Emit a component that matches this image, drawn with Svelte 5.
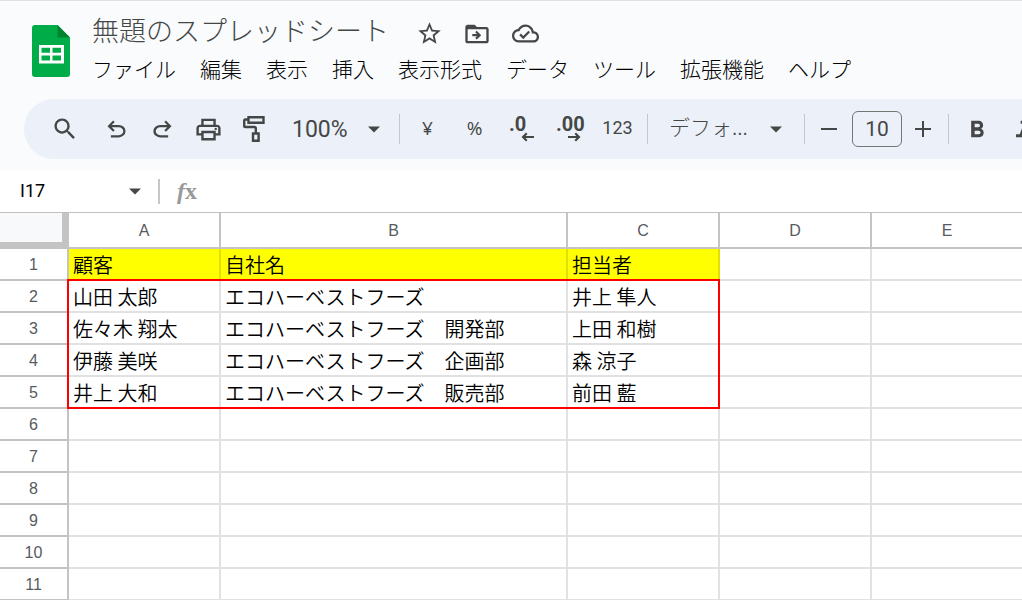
<script>
    const menus = ["ファイル", "編集", "表示", "挿入", "表示形式", "データ", "ツール", "拡張機能", "ヘルプ"]

    // column widths and row heights include the 2px grid line
    const headWidth = 69;
    const rowHeight = 32;
    const columns = [{name: "A", width: 152}, {name: "B", width: 347}, {name: "C", width: 152}, {name: "D", width: 152}, {name: "E", width: 0}]
    const rows = [
        ["顧客", "自社名", "担当者"],
        ["山田 太郎", "エコハーベストフーズ", "井上 隼人"],
        ["佐々木 翔太", "エコハーベストフーズ　開発部", "上田 和樹"],
        ["伊藤 美咲", "エコハーベストフーズ　企画部", "森 涼子"],
        ["井上 大和", "エコハーベストフーズ　販売部", "前田 藍"],
        [], [], [], [], [], []
    ]
    // rows 2-5, columns A-C
    const range = {fromRow: 1, toRow: 4, cols: 3}

    const rangeWidth = columns.slice(0, range.cols).reduce((sum, c) => sum + c.width, 0) + 2;
    const rangeHeight = (range.toRow - range.fromRow + 1) * rowHeight + 2;
    const rangeTop = 36 + range.fromRow * rowHeight - 2;

    let title = $state("無題のスプレッドシート");
    let cell = $state("I17");
    let fontSize = $state("10");
</script>

{#snippet arrow()}
    <svg class="arrow" width="12" height="7" viewBox="0 0 12 7" aria-hidden="true"><path d="M0 0.5h12L6 6.5z" /></svg>
{/snippet}

<div class="app">
    <header>
        <div class="top">
            <svg class="logo" width="38" height="52" viewBox="0 0 38 52" aria-hidden="true">
                <path fill="#00ac47" d="M3 0h22.500l12.500 12.500V49a3 3 0 0 1-3 3H3a3 3 0 0 1-3-3V3a3 3 0 0 1 3-3z" />
                <path fill="#00832d" d="M25.500 0L38 12.500H25.500z" />
                <path fill="#fff" fill-rule="evenodd" d="M7 20h25v18.500H7zM9.500 22.800v5h8.500v-5zM20.500 22.800v5H29v-5zM9.500 30.500v5h8.500v-5zM20.500 30.500v5H29v-5z" />
            </svg>
            <div class="heading">
                <div class="title-row">
                    <input class="title" aria-label="名前を変更" bind:value={title} />
                    <button aria-label="スター">
                        <svg width="27" height="27" viewBox="0 0 24 24"><path d="M22 9.240l-7.190-.62L12 2 9.190 8.630 2 9.240l5.460 4.730L5.820 21 12 17.270 18.180 21l-1.630-7.030L22 9.240zM12 15.400l-3.760 2.270 1-4.280-3.320-2.880 4.380-.38L12 6.100l1.710 4.040 4.380.38-3.320 2.880 1 4.280L12 15.400z" /></svg>
                    </button>
                    <button aria-label="移動">
                        <svg width="28" height="28" viewBox="0 0 24 24"><path d="M20 6h-8l-2-2H4c-1.100 0-2 .9-2 2v12c0 1.100.9 2 2 2h16c1.100 0 2-.9 2-2V8c0-1.100-.9-2-2-2zm0 12H4V8h16v10zm-8.200-1.200l-1.300-1.300 1.500-1.600H8v-1.800h4l-1.500-1.600 1.300-1.300L15.600 13z" /></svg>
                    </button>
                    <button aria-label="ドライブに保存しました">
                        <svg width="27" height="27" viewBox="0 0 24 24"><path d="M19.350 10.040C18.670 6.590 15.640 4 12 4 9.110 4 6.600 5.640 5.350 8.040 2.340 8.360 0 10.910 0 14c0 3.310 2.690 6 6 6h13c2.760 0 5-2.240 5-5 0-2.640-2.050-4.780-4.650-4.960zM19 18H6c-2.210 0-4-1.790-4-4 0-2.050 1.530-3.760 3.560-3.970l1.070-.11.5-.95C8.080 7.140 9.940 6 12 6c2.620 0 4.880 1.860 5.390 4.430l.3 1.500 1.530.11c1.560.1 2.780 1.410 2.780 2.960 0 1.650-1.350 3-3 3zm-9-3.820l-2.090-2.090L6.500 13.500 10 17l6.010-6.010-1.410-1.410z" /></svg>
                    </button>
                </div>
                <nav>
                    {#each menus as menu}
                        <button>{menu}</button>
                    {/each}
                </nav>
            </div>
        </div>

        <div class="toolbar">
            <button class="tool search" aria-label="検索">
                <svg width="28" height="28" viewBox="0 0 24 24"><path d="M15.500 14h-.79l-.28-.27C15.410 12.590 16 11.110 16 9.500 16 5.910 13.090 3 9.500 3S3 5.910 3 9.500 5.910 16 9.500 16c1.610 0 3.090-.59 4.230-1.570l.27.28v.79l5 4.990L20.490 19l-4.990-5zm-6 0C7.010 14 5 11.990 5 9.500S7.010 5 9.500 5 14 7.010 14 9.500 11.990 14 9.500 14z" /></svg>
            </button>
            <button class="tool" aria-label="元に戻す">
                <svg width="27" height="27" viewBox="0 -960 960 960"><path d="M280-200v-80h284q63 0 109.500-40T720-420q0-60-46.500-100T564-560H312l104 104-56 56-200-200 200-200 56 56-104 104h252q97 0 169.500 63T800-420q0 94-72.500 157T564-200H280Z" /></svg>
            </button>
            <button class="tool" aria-label="やり直し">
                <svg width="27" height="27" viewBox="0 -960 960 960"><path d="M396-200q-97 0-169.500-63T154-420q0-94 72.500-157T396-640h252L544-744l56-56 200 200-200 200-56-56 104-104H396q-63 0-109.500 40T240-420q0 60 46.500 100T396-280h284v80H396Z" /></svg>
            </button>
            <button class="tool" aria-label="印刷">
                <svg width="29" height="29" viewBox="0 0 24 24"><path d="M19 8h-1V3H6v5H5c-1.660 0-3 1.340-3 3v6h4v4h12v-4h4v-6c0-1.660-1.340-3-3-3zM8 5h8v3H8V5zm8 12v2H8v-4h8v2zm2-2v-2H6v2H4v-4c0-.55.45-1 1-1h14c.55 0 1 .45 1 1v4h-2z" /><circle cx="18" cy="11.500" r="1" /></svg>
            </button>
            <button class="tool" aria-label="書式を貼り付け">
                <svg class="line" width="22" height="26" viewBox="0 0 22 26"><path d="M5.500 1.200H20.500V6.800H5.500zM5.500 3.500H2.500a1.300 1.300 0 0 0-1.300 1.300V9.700A1.300 1.300 0 0 0 2.500 11H11.500a1.300 1.300 0 0 1 1.300 1.300V17.500M10 17.500H15.600V24.800H10z" /></svg>
            </button>
            <label class="dropdown zoom">
                <select aria-label="ズーム"><option>100%</option></select>
                {@render arrow()}
            </label>
            <span class="sep"></span>
            <div class="formats">
                <button class="tool symbol">¥</button>
                <button class="tool symbol">%</button>
                <button class="tool decimal" aria-label="小数点以下の桁数を減らす">
                    <span>.0</span>
                    <svg width="13" height="10" viewBox="0 0 13 10"><path d="M5 0.500L0.500 5 5 9.500 6.500 8 4.600 6.100H13V3.900H4.600L6.500 2z" /></svg>
                </button>
                <button class="tool decimal" aria-label="小数点以下の桁数を増やす">
                    <span>.00</span>
                    <svg width="13" height="10" viewBox="0 0 13 10"><path d="M8 0.500L12.500 5 8 9.500 6.500 8 8.400 6.100H0V3.900H8.400L6.500 2z" /></svg>
                </button>
                <button class="tool number">123</button>
            </div>
            <span class="sep"></span>
            <label class="dropdown font">
                <select aria-label="フォント"><option>デフォ...</option></select>
                {@render arrow()}
            </label>
            <span class="sep"></span>
            <button class="step" aria-label="フォントサイズを縮小">
                <svg width="16" height="16" viewBox="0 0 16 16"><path d="M0 7h16v2H0z" /></svg>
            </button>
            <input class="size" aria-label="フォントサイズ" bind:value={fontSize} />
            <button class="step" aria-label="フォントサイズを拡大">
                <svg width="16" height="16" viewBox="0 0 16 16"><path d="M0 7h7V0h2v7h7v2H9v7H7V9H0z" /></svg>
            </button>
            <span class="sep last"></span>
            <button class="tool bold" aria-label="太字">
                <svg width="28" height="28" viewBox="0 0 24 24"><path d="M15.600 11.790c.97-.67 1.650-1.770 1.650-2.790 0-2.260-1.750-4-4-4H7v14h7.040c2.090 0 3.710-1.700 3.710-3.790 0-1.520-.86-2.820-2.150-3.420zM10 7.500h3c.83 0 1.500.67 1.500 1.500s-.67 1.500-1.500 1.500h-3v-3zm3.500 9H10v-3h3.500c.83 0 1.500.67 1.500 1.500s-.67 1.500-1.500 1.500z" /></svg>
            </button>
            <button class="tool" aria-label="斜体">
                <svg width="28" height="28" viewBox="0 0 24 24"><path d="M10 5v2.500h2.600L9.200 16.500H6V19h9v-2.500h-3.100l3.400-9H18V5z" /></svg>
            </button>
        </div>
    </header>

    <div class="formula">
        <input class="name-box" aria-label="名前ボックス" bind:value={cell} />
        <button aria-label="名前付き範囲">{@render arrow()}</button>
        <span class="bar"></span>
        <span class="fx"><i>f</i>x</span>
        <input class="content" aria-label="数式" />
    </div>

    <div class="sheet">
        <table>
            <colgroup>
                <col style="width: {headWidth}px" />
                {#each columns as column}
                    <col style={column.width ? `width: ${column.width}px` : null} />
                {/each}
            </colgroup>
            <thead>
                <tr>
                    <td class="corner"></td>
                    {#each columns as column}
                        <th scope="col">{column.name}</th>
                    {/each}
                </tr>
            </thead>
            <tbody>
                {#each rows as row, i}
                    <tr>
                        <th scope="row">{i + 1}</th>
                        {#each columns as column, j}
                            <td class:label={i === 0 && j < range.cols}>{row[j] ?? ""}</td>
                        {/each}
                    </tr>
                {/each}
            </tbody>
        </table>
        <div class="range" style="left: {headWidth - 2}px; top: {rangeTop}px; width: {rangeWidth}px; height: {rangeHeight}px"></div>
    </div>
</div>

<style>
    :global(body) {
        margin: 0;
        background: #fff;
    }
    .app {
        height: 100vh;
        overflow: hidden;
        font-family: Roboto, "Noto Sans CJK JP", sans-serif;
        color: #444746;
    }
    button, input, select {
        font: inherit;
        color: inherit;
        margin: 0;
        padding: 0;
        border: none;
        background: none;
        box-sizing: border-box;
    }
    button {
        display: flex;
        align-items: center;
        justify-content: center;
        flex: none;
        cursor: pointer;
    }
    svg {
        display: block;
        flex: none;
        fill: #444746;
    }
    header {
        border-top: 1px solid #dfe1dc;
        background: #f9fbfd;
        padding-bottom: 12px;
    }
    .top {
        display: flex;
        gap: 22px;
        height: 98px;
        padding-left: 32px;
    }
    .logo {
        margin-top: 24px;
    }
    .heading {
        flex: 1;
        padding-top: 10px;
    }
    .title-row {
        display: flex;
        align-items: flex-end;
        height: 37px;
    }
    .title {
        width: 313px;
        height: 37px;
        font: 300 27px/37px "Noto Sans CJK JP", sans-serif;
    }
    .title-row button {
        width: 48px;
        height: 29px;
    }
    nav {
        display: flex;
        gap: 24px;
        padding-top: 4px;
    }
    nav button {
        font: 300 21px/32px "Noto Sans CJK JP", sans-serif;
        color: #000;
        white-space: nowrap;
    }
    .toolbar {
        display: flex;
        align-items: center;
        height: 60px;
        margin-left: 24px;
        padding-left: 18px;
        border-radius: 30px 0 0 30px;
        background: #ecf0f9;
        overflow: hidden;
    }
    .tool {
        width: 46px;
        height: 40px;
    }
    .search {
        margin-right: 5px;
    }
    .line {
        fill: none;
        stroke: #444746;
        stroke-width: 2.4;
    }
    .dropdown {
        display: grid;
        align-items: center;
        flex: none;
    }
    .dropdown select, .dropdown .arrow {
        grid-area: 1 / 1;
    }
    .dropdown select {
        width: 100%;
        height: 40px;
        appearance: none;
    }
    .dropdown .arrow {
        justify-self: end;
        pointer-events: none;
    }
    .zoom {
        width: 88px;
        margin: 0 19px 0 15px;
        font-size: 23px;
    }
    .font {
        width: 113px;
        margin: 0 22px 0 21px;
        font: 300 21px "Noto Sans CJK JP", sans-serif;
    }
    .font select {
        padding-bottom: 6px;
    }
    .sep {
        flex: none;
        width: 1px;
        height: 30px;
        background: #c7c7c7;
    }
    .formats {
        display: flex;
        flex: none;
        padding: 0 4px;
    }
    .formats .tool {
        width: 47px;
        padding-bottom: 3px;
    }
    .symbol {
        font-family: "Open Sans", sans-serif;
        font-size: 19px;
    }
    .formats .number {
        width: 51px;
        font-size: 18px;
    }
    .formats .decimal {
        flex-direction: column;
        align-items: flex-end;
        padding-right: 11px;
        padding-bottom: 0;
    }
    .decimal span {
        align-self: flex-start;
        margin-left: 11px;
        font-size: 20px;
        font-weight: 700;
        line-height: 16px;
    }
    .step {
        width: 42px;
        height: 40px;
    }
    .sep + .step {
        width: 47px;
    }
    .size {
        width: 50px;
        height: 36px;
        border: 1px solid #747775;
        border-radius: 6px;
        font-size: 21px;
        text-align: center;
    }
    .last {
        margin-left: 4px;
    }
    .bold {
        margin-left: 5px;
    }
    .formula {
        display: flex;
        align-items: center;
        height: 41px;
        border-bottom: 1px solid #c0c0c0;
    }
    .name-box {
        width: 124px;
        height: 32px;
        padding: 0 0 2px 20px;
        font-size: 18px;
        color: #000;
    }
    .formula button {
        width: 22px;
        height: 24px;
    }
    .bar {
        width: 2px;
        height: 25px;
        margin: 0 17px 0 12px;
        background: #c7c7c7;
    }
    .fx {
        padding-bottom: 2px;
        font: 700 24px/32px "Liberation Serif", serif;
        color: #999;
    }
    .content {
        flex: 1;
        height: 32px;
    }
    .sheet {
        position: relative;
    }
    table {
        width: 100%;
        table-layout: fixed;
        border-collapse: separate;
        border-spacing: 0;
    }
    th, td {
        box-sizing: border-box;
        height: 32px;
        padding: 2px 0 0;
        border-right: 2px solid #e1e1e1;
        border-bottom: 2px solid #e1e1e1;
        line-height: 28px;
        white-space: nowrap;
    }
    th {
        border-color: #c4c4c4;
        font-family: "Liberation Sans", Arial, sans-serif;
        font-size: 16px;
        font-weight: 400;
        color: #575b5f;
    }
    thead th, .corner {
        height: 36px;
    }
    .corner {
        border-right: 7px solid #c4c4c4;
        border-bottom: 7px solid #c4c4c4;
        background: #f8f9fa;
    }
    td {
        padding-left: 4px;
        font-family: "Noto Sans CJK JP", sans-serif;
        font-size: 20px;
        font-weight: 350;
        color: #000;
    }
    td:last-child, th:last-child:not([scope="row"]) {
        border-right: none;
    }
    .label {
        border-color: #e1e100;
        background: #ff0;
    }
    /* frame round the customer rows, drawn over the grid lines */
    .range {
        position: absolute;
        box-sizing: border-box;
        border: 2px solid #f00;
        pointer-events: none;
    }
</style>
